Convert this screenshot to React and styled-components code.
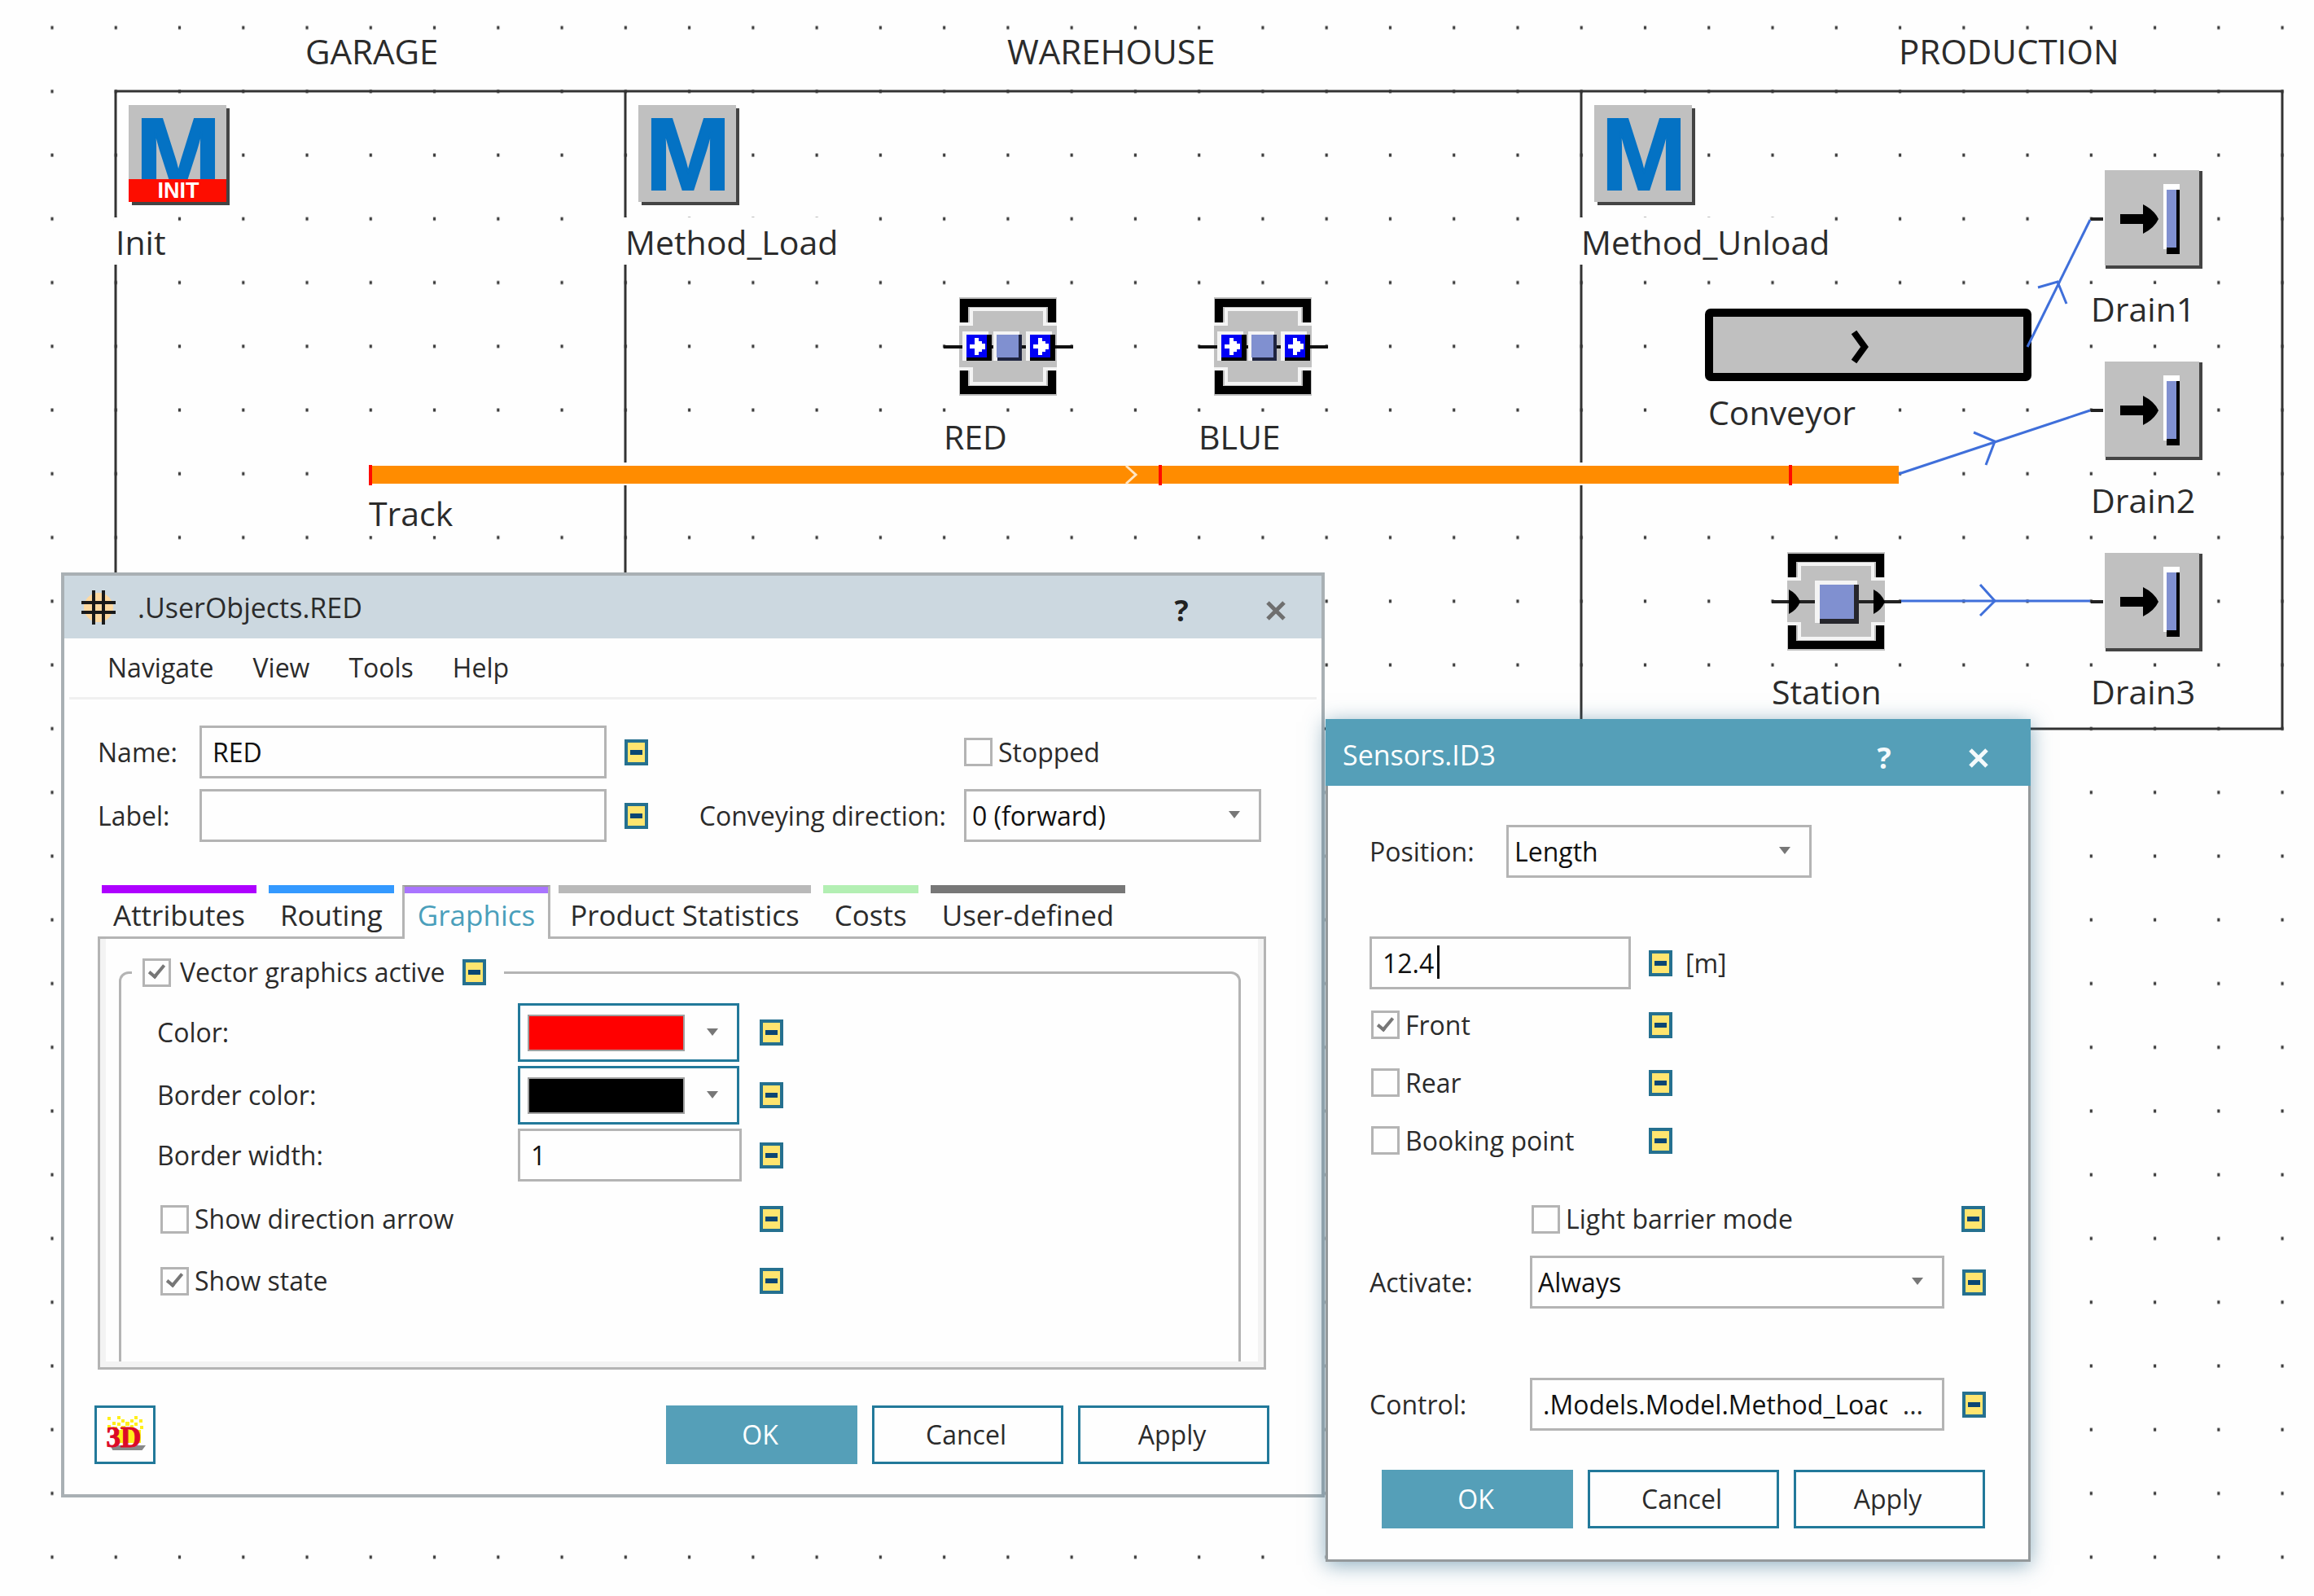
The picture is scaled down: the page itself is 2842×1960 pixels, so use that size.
import React from "react";
import styled, { createGlobalStyle, css } from "styled-components";

const PITCH = 78.26;
const ORIGIN_X = 64;
const ORIGIN_Y = 34;

const color = {
  page: "#fefefe",
  ink: "#2b2b2b",
  line: "#333333",
  field: "#b4b4b4",
  teal: "#559fb8",
  tealDark: "#22799a",
  silver: "#c0c0c0",
  lilac: "#8090d0",
};

const GlobalStyle = createGlobalStyle`
  *, *::before, *::after { box-sizing: border-box; }
  body {
    margin: 0;
    background: ${color.page};
    color: ${color.ink};
    font-family: "Open Sans", "Noto Sans", sans-serif;
    font-size: 32px;
    line-height: 44px;
  }
  button, input, select { font: inherit; color: inherit; margin: 0; }
`;

/* ---------- model canvas ---------- */

const Stage = styled.main`
  position: relative;
  min-height: 100vh;
  overflow: hidden;
`;

const Layer = styled.svg`
  position: absolute;
  inset: 0;
  width: 100%;
  height: 100%;
  pointer-events: none;
`;

const AreaTitle = styled.h2`
  position: absolute;
  left: ${(p) => p.$x}px;
  top: 34px;
  margin: 0;
  font-size: 42px;
  font-weight: 400;
  line-height: 57px;
`;

const NodeBox = styled.figure`
  position: absolute;
  left: ${(p) => p.$x}px;
  top: ${(p) => p.$y}px;
  margin: 0;
  display: flex;
  flex-direction: column;
  align-items: flex-start;
`;

const NodeArt = styled.svg`
  display: block;
  overflow: visible;
  flex: none;
`;

const NodeLabel = styled.figcaption`
  margin-left: -2px;
  padding: 2px 0 0 2px;
  background: ${color.page};
  font-size: 41px;
  line-height: 56px;
  white-space: nowrap;
`;

function Node({ x, y, width = 156, height = 159, label, children }) {
  return (
    <NodeBox $x={x} $y={y}>
      <NodeArt width={width} height={height} aria-hidden="true">
        {children}
      </NodeArt>
      <NodeLabel>{label}</NodeLabel>
    </NodeBox>
  );
}

function MethodArt({ init }) {
  return (
    <g>
      <rect x="20" y="21" width="120" height="119" fill="#444" />
      <rect x="16" y="17" width="120" height="119" fill={color.silver} />
      <text
        x="77"
        y="121"
        textAnchor="middle"
        fontFamily="Liberation Sans, Arial, sans-serif"
        fontWeight="700"
        fontSize="126"
        fill="#0472c4"
        stroke="#0472c4"
        strokeWidth="2"
      >
        M
      </text>
      {init && (
        <g>
          <rect x="16" y="108" width="120" height="28" fill="#fd0d00" />
          <text
            x="77"
            y="131"
            textAnchor="middle"
            fontFamily="Liberation Sans, Arial, sans-serif"
            fontWeight="700"
            fontSize="27"
            fill="#fff"
          >
            INIT
          </text>
        </g>
      )}
    </g>
  );
}

function Brackets() {
  return (
    <g>
      <rect x="19" y="18" width="120" height="121" fill={color.silver} />
      <path d="M19 51H34V33H124V51H139" fill="none" stroke="#f4f4f4" strokeWidth="4" />
      <path d="M19 106H34V124H124V106H139" fill="none" stroke="#f4f4f4" strokeWidth="4" />
      <path d="M25 49V25H133V49" fill="none" stroke="#000" strokeWidth="10" />
      <path d="M25 108V132H133V108" fill="none" stroke="#000" strokeWidth="10" />
    </g>
  );
}

function FlowBlock({ x }) {
  return (
    <g>
      <rect x={x - 5} y="60" width="32" height="36" fill="#f4f4f4" />
      <rect x={x} y="64" width="31" height="32" fill="#000" />
      <rect x={x} y="64" width="25" height="28" fill="#0000f5" />
      <path d={`M${x + 4} 76h6v-8h5v4h4v3h4v7h-4v3h-4v4h-5v-8h-6z`} fill="#fff" />
    </g>
  );
}

function ParallelStationArt() {
  return (
    <g>
      <Brackets />
      <path d="M0 79H159" stroke="#111" strokeWidth="4" />
      <FlowBlock x={28} />
      <rect x="61" y="60" width="32" height="36" fill="#f4f4f4" />
      <rect x="66" y="64" width="30" height="32" fill="#1f2440" />
      <rect x="65" y="64" width="27" height="28" fill={color.lilac} />
      <FlowBlock x={106} />
    </g>
  );
}

function StationArt() {
  return (
    <g>
      <Brackets />
      <path d="M0 79H159" stroke="#222" strokeWidth="4" />
      <path d="M21 64Q31 69 35 79Q31 89 21 94z" />
      <path d="M125 64Q135 69 139 79Q135 89 125 94z" />
      <rect x="53" y="53" width="52" height="52" fill="#f4f4f4" />
      <rect x="59" y="58" width="48" height="48" fill="#26262c" />
      <rect x="59" y="58" width="42" height="42" fill={color.lilac} />
    </g>
  );
}

function DrainArt() {
  return (
    <g>
      <path d="M0 79H15" stroke="#222" strokeWidth="4" />
      <rect x="18" y="20" width="119" height="120" fill="#444" />
      <rect x="17" y="19" width="116" height="117" fill={color.silver} />
      <path d="M36 73H64V61Q78 68 83 79Q78 90 64 97V85H36z" />
      <rect x="89" y="36" width="20" height="80" fill="#fff" />
      <rect x="93" y="43" width="16" height="79" fill="#000" />
      <rect x="93" y="43" width="12" height="71" fill={color.lilac} />
    </g>
  );
}

function ConveyorArt() {
  return (
    <g>
      <rect x="1" y="5" width="391" height="79" rx="2" fill={color.silver} stroke="#000" strokeWidth="10" />
      <path d="M179 29L192 47L179 65" fill="none" stroke="#000" strokeWidth="8" />
    </g>
  );
}

function TrackArt() {
  return (
    <g>
      <rect x="0" y="0" width="1878" height="28" fill="#fefefe" />
      <rect x="2" y="4" width="1877" height="22" fill="#ff8c00" />
      <path d="M930 4L942 15L930 26" fill="none" stroke="#ffe6c4" strokeWidth="3" />
      <path d="M2 3V28M972 3V28M1746 3V28" stroke="#ff0a00" strokeWidth="4" />
    </g>
  );
}

function Backdrop() {
  return (
    <Layer aria-hidden="true">
      <defs>
        <pattern
          id="grid-dots"
          x={ORIGIN_X - PITCH / 2}
          y={ORIGIN_Y - PITCH / 2}
          width={PITCH}
          height={PITCH}
          patternUnits="userSpaceOnUse"
        >
          <rect x={PITCH / 2 - 1.6} y={PITCH / 2 - 2} width="3.2" height="4" fill="#3c3c3c" />
        </pattern>
      </defs>
      <rect width="100%" height="100%" fill="url(#grid-dots)" />
      <rect x="142" y="112" width="2661" height="783" fill="none" stroke={color.line} strokeWidth="3" />
      <path d="M768 112V895M1942 112V895" stroke={color.line} strokeWidth="3" />
    </Layer>
  );
}

function Connectors() {
  return (
    <Layer aria-hidden="true">
      <g fill="none" stroke="#3f6fda" strokeWidth="3">
        <path d="M2490 426L2567 270" />
        <path d="M2503 353L2527 346L2538 373" />
        <path d="M2332 582L2567 504" />
        <path d="M2424 531L2450 542L2439 571" />
        <path d="M2335 738H2567" />
        <path d="M2432 718L2450 738L2432 756" />
      </g>
    </Layer>
  );
}

/* ---------- dialogs ---------- */

const Dialog = styled.section`
  position: absolute;
  left: ${(p) => p.$x}px;
  top: ${(p) => p.$y}px;
  width: ${(p) => p.$width}px;
  background: ${color.page};
  ${(p) =>
    p.$active
      ? css`
          box-shadow: 0 4px 24px rgba(50, 110, 140, 0.55);
        `
      : css`
          border: 4px solid #a9b0b4;
        `}
`;

const TitleBar = styled.header`
  display: flex;
  align-items: center;
  height: 77px;
  padding: 0 26px 0 21px;
  gap: 27px;
  background: #ccd8e0;
  ${(p) =>
    p.$active &&
    css`
      height: 82px;
      padding: 6px 34px 0 21px;
      background: ${color.teal};
      color: #fff;
    `}
`;

const Title = styled.h1`
  flex: 1;
  margin: 0;
  font-size: 34px;
  font-weight: 400;
  line-height: 46px;
`;

const TitleActions = styled.div`
  display: flex;
  gap: 56px;
  padding-top: 8px;
`;

const TitleButton = styled.button`
  display: grid;
  place-items: center;
  width: 60px;
  height: 44px;
  padding: 0;
  border: 0;
  background: none;
  font-size: 36px;
  font-weight: 700;
  color: ${(p) => p.$tone};
`;

const Menu = styled.nav`
  display: flex;
  align-items: center;
  gap: 48px;
  height: 75px;
  margin: 0 6px;
  padding: 0 47px;
  border-bottom: 3px solid #f0f0f0;
`;

const MenuItem = styled.button`
  padding: 0;
  border: 0;
  background: none;
`;

const ObjectBody = styled.div`
  padding: 32px 64px 37px 37px;
`;

const Inset = styled.div`
  padding: 0 4px;
`;

const HeadFields = styled.div`
  display: grid;
  row-gap: 13px;
  padding-right: 6px;
`;

const FieldRow = styled.div`
  display: flex;
  align-items: center;
  height: 65px;
  gap: 22px;
`;

const LabelledField = styled.div`
  display: grid;
  grid-template-columns: ${(p) => p.$label}px ${(p) => p.$field}px;
  align-items: center;
`;

const EndGroup = styled.div`
  display: flex;
  align-items: center;
  gap: 22px;
  margin-left: auto;
`;

const EndSlot = styled.div`
  display: flex;
  width: 365px;
`;

const TextInput = styled.input`
  display: block;
  width: 100%;
  height: 65px;
  padding: 0 13px;
  border: 3px solid ${color.field};
  border-radius: 0;
  background: ${color.page};
  color: #111;
  outline: none;
`;

const SelectWrap = styled.div`
  position: relative;
  width: 100%;
`;

const SelectBox = styled.select`
  appearance: none;
  display: block;
  width: 100%;
  height: 65px;
  padding: 0 48px 0 7px;
  border: 3px solid ${color.field};
  border-radius: 0;
  background: ${color.page};
  color: #111;
  outline: none;
`;

const SelectArrow = styled.svg`
  position: absolute;
  right: 25px;
  top: 27px;
  pointer-events: none;
`;

function Select({ id, value }) {
  return (
    <SelectWrap>
      <SelectBox id={id} defaultValue={value}>
        <option>{value}</option>
      </SelectBox>
      <SelectArrow width="16" height="10" aria-hidden="true">
        <path d="M1 0H15L8 9z" fill="#777" />
      </SelectArrow>
    </SelectWrap>
  );
}

const CheckLabel = styled.label`
  display: flex;
  align-items: center;
  gap: ${(p) => p.$gap || 7}px;
  white-space: nowrap;
`;

const CheckBox = styled.input`
  appearance: none;
  display: grid;
  place-items: center;
  flex: none;
  width: 35px;
  height: 35px;
  border: 3px solid ${color.field};
  background: ${color.page};
  &:checked::after {
    content: "";
    width: 11px;
    height: 20px;
    margin-bottom: 6px;
    border: solid #777;
    border-width: 0 4px 4px 0;
    transform: rotate(40deg);
  }
`;

function Check({ children, checked, gap }) {
  return (
    <CheckLabel $gap={gap}>
      <CheckBox type="checkbox" defaultChecked={checked} />
      {children}
    </CheckLabel>
  );
}

const ToggleButton = styled.button`
  display: grid;
  place-items: center;
  flex: none;
  width: 29px;
  height: 32px;
  padding: 0;
  border: 4px solid #25708f;
  background: #ffe56f;
  &::before {
    content: "";
    width: 15px;
    height: 6px;
    background: #0b4673;
  }
`;

const Inherit = () => <ToggleButton type="button" aria-label="Toggle inheritance" />;

const TabList = styled.div`
  display: flex;
  gap: 15px;
  margin-top: 53px;
  padding-left: 5px;
`;

const Tab = styled.button`
  height: 63px;
  padding: 0 14px;
  border: 0;
  border-top: 10px solid ${(p) => p.$tone};
  background: none;
  font-size: 35px;
  line-height: 48px;
  white-space: nowrap;
  ${(p) =>
    p.$selected &&
    css`
      height: 66px;
      margin: 0 -5px -3px;
      padding: 8px 16px 3px;
      border: 3px solid ${color.field};
      border-top: 2px solid #999;
      border-bottom: 0;
      background: ${color.page};
      box-shadow: inset 0 8px ${p.$tone};
      color: #4a9fbb;
    `}
`;

const TabPanel = styled.div`
  padding: 19px 28px 7px 23px;
  border: 3px solid ${color.field};
  box-shadow: inset 7px 0 #f3f3f3, inset -7px -7px #f3f3f3;
`;

const Group = styled.fieldset`
  min-width: 0;
  margin: 0;
  padding: 16px 0 69px 44px;
  border: 3px solid ${color.field};
  border-bottom: 0;
  border-radius: 12px 12px 0 0;
`;

const GroupLegend = styled.legend`
  display: flex;
  align-items: center;
  gap: 22px;
  margin-left: -31px;
  padding: 0 22px 0 13px;
`;

const Properties = styled.div`
  display: grid;
  grid-template-columns: 443px 275px 1fr;
  grid-template-rows: 72px 72px 65px 82px 60px;
  row-gap: 5px;
  align-items: center;
`;

const CheckCell = styled.div`
  display: flex;
  grid-column: span 2;
  padding-left: 4px;
`;

const ToggleCell = styled.div`
  padding-left: 22px;
`;

const ColorButton = styled.button`
  display: flex;
  align-items: center;
  gap: 26px;
  width: 272px;
  height: 72px;
  padding: 0 9px;
  border: 3px solid ${color.tealDark};
  background: ${color.page};
`;

const Swatch = styled.span`
  width: 193px;
  height: 45px;
  border: 2px solid #a0a0a0;
  background: ${(p) => p.$fill};
`;

function ColorPicker({ id, fill }) {
  return (
    <ColorButton type="button" id={id}>
      <Swatch $fill={fill} />
      <svg width="16" height="10" aria-hidden="true">
        <path d="M1 0H15L8 9z" fill="#777" />
      </svg>
    </ColorButton>
  );
}

const Footer = styled.footer`
  display: flex;
  justify-content: flex-end;
  gap: 18px;
  margin-top: ${(p) => p.$space}px;
`;

const PushButton = styled.button`
  width: 235px;
  height: 72px;
  padding: 0 4px 0 0;
  border: 3px solid ${color.tealDark};
  background: ${color.page};
  ${(p) =>
    p.$primary &&
    css`
      border-color: ${color.teal};
      background: ${color.teal};
      color: #fff;
    `}
`;

const ViewButton = styled.button`
  display: grid;
  place-items: center;
  width: 75px;
  height: 72px;
  margin-right: auto;
  padding: 0;
  border: 3px solid ${color.tealDark};
  background: ${color.page};
`;

function CloseMark({ tone }) {
  return (
    <svg width="24" height="24" aria-hidden="true">
      <path d="M2 2L22 22M22 2L2 22" stroke={tone} strokeWidth="5" />
    </svg>
  );
}

function FrameIcon() {
  return (
    <svg width="42" height="42" aria-hidden="true">
      <ellipse cx="21" cy="21" rx="18" ry="18" fill="#ffd9a0" />
      <path d="M15 0V42M27 0V42M0 15H42M0 27H42" stroke="#1a1a1a" strokeWidth="4" />
    </svg>
  );
}

function View3DIcon() {
  return (
    <svg width="60" height="60" viewBox="-5 -6 60 60" aria-hidden="true">
      <g fill="#ffef1a">
        <path d="M3 2h4v4h-4zM15 1h4v4h-4zM36 1h4v4h-4zM42 5h4v4h-4zM20 5h4v4h-4zM31 5h4v4h-4zM9 8h4v4h-4zM15 9h4v4h-4zM25 8h5v5h-5zM3 12h4v4h-4zM36 9h4v4h-4zM43 13h4v4h-4zM20 13h5v6h-5zM31 12h4v5h-4zM10 14h5v5h-5z" />
        <rect x="14" y="18" width="30" height="16" />
      </g>
      <path d="M8 38H48L45 42H10z" fill="#888" stroke="#888" strokeWidth="2" />
      <text
        x="23"
        y="39"
        textAnchor="middle"
        fontFamily="Liberation Serif, serif"
        fontWeight="700"
        fontSize="35"
        fill="#dc0a28"
        stroke="#dc0a28"
        strokeWidth="1"
      >
        3D
      </text>
    </svg>
  );
}

function DialogTitle({ children, icon, active }) {
  const tone = active ? "#f4fafc" : "#6f6f6f";
  return (
    <TitleBar $active={active}>
      {icon}
      <Title>{children}</Title>
      <TitleActions>
        <TitleButton type="button" $tone={active ? "#f4fafc" : "#222"}>
          ?
        </TitleButton>
        <TitleButton type="button" aria-label="Close">
          <CloseMark tone={tone} />
        </TitleButton>
      </TitleActions>
    </TitleBar>
  );
}

function DialogButtons({ space, children }) {
  return (
    <Footer $space={space}>
      {children}
      <PushButton type="button" $primary>OK</PushButton>
      <PushButton type="button">Cancel</PushButton>
      <PushButton type="button">Apply</PushButton>
    </Footer>
  );
}

const tabs = [
  ["Attributes", "#ae00ff"],
  ["Routing", "#3399ff"],
  ["Graphics", "#a974ff"],
  ["Product Statistics", "#b9b9b9"],
  ["Costs", "#b3efb3"],
  ["User-defined", "#777777"],
];

function ObjectDialog() {
  return (
    <Dialog $x={75} $y={703} $width={1552}>
      <DialogTitle icon={<FrameIcon />}>.UserObjects.RED</DialogTitle>
      <Menu>
        {["Navigate", "View", "Tools", "Help"].map((item) => (
          <MenuItem type="button" key={item}>{item}</MenuItem>
        ))}
      </Menu>
      <ObjectBody>
        <Inset>
          <HeadFields>
            <FieldRow>
              <LabelledField $label={125} $field={500}>
                <label htmlFor="name">Name:</label>
                <TextInput id="name" defaultValue="RED" />
              </LabelledField>
              <Inherit />
              <EndGroup>
                <EndSlot>
                  <Check>Stopped</Check>
                </EndSlot>
              </EndGroup>
            </FieldRow>
            <FieldRow>
              <LabelledField $label={125} $field={500}>
                <label htmlFor="label">Label:</label>
                <TextInput id="label" />
              </LabelledField>
              <Inherit />
              <EndGroup>
                <label htmlFor="direction">Conveying direction:</label>
                <EndSlot>
                  <Select id="direction" value="0 (forward)" />
                </EndSlot>
              </EndGroup>
            </FieldRow>
          </HeadFields>
          <TabList role="tablist">
            {tabs.map(([name, tone]) => (
              <Tab
                key={name}
                type="button"
                role="tab"
                aria-selected={name === "Graphics"}
                $tone={tone}
                $selected={name === "Graphics"}
              >
                {name}
              </Tab>
            ))}
          </TabList>
          <TabPanel role="tabpanel">
            <Group>
              <GroupLegend>
                <Check checked gap={11}>Vector graphics active</Check>
                <Inherit />
              </GroupLegend>
              <Properties>
                <label htmlFor="fill-color">Color:</label>
                <ColorPicker id="fill-color" fill="#ff0000" />
                <ToggleCell><Inherit /></ToggleCell>

                <label htmlFor="border-color">Border color:</label>
                <ColorPicker id="border-color" fill="#000000" />
                <ToggleCell><Inherit /></ToggleCell>

                <label htmlFor="border-width">Border width:</label>
                <TextInput id="border-width" defaultValue="1" />
                <ToggleCell><Inherit /></ToggleCell>

                <CheckCell><Check>Show direction arrow</Check></CheckCell>
                <ToggleCell><Inherit /></ToggleCell>

                <CheckCell><Check checked>Show state</Check></CheckCell>
                <ToggleCell><Inherit /></ToggleCell>
              </Properties>
            </Group>
          </TabPanel>
        </Inset>
        <DialogButtons space={44}>
          <ViewButton type="button" aria-label="Open in 3D">
            <View3DIcon />
          </ViewButton>
        </DialogButtons>
      </ObjectBody>
    </Dialog>
  );
}

const SensorBody = styled.div`
  padding: 48px 53px 38px 51px;
  border: 3px solid #94999b;
  border-top: 0;
`;

const LengthRow = styled(FieldRow)`
  margin-top: 72px;
`;

const LengthField = styled.div`
  position: relative;
  width: 321px;
`;

const Caret = styled.span`
  position: absolute;
  left: 83px;
  top: 11px;
  width: 3px;
  height: 41px;
  background: #111;
`;

const UnitGroup = styled.div`
  display: flex;
  align-items: center;
  gap: 16px;
`;

const SensorChecks = styled.div`
  display: grid;
  grid-template-columns: 341px 29px;
  grid-auto-rows: 71px;
  align-items: center;
  margin-top: 8px;
  padding-left: 2px;
`;

const LightRow = styled.div`
  display: flex;
  align-items: center;
  justify-content: space-between;
  height: 62px;
  margin-top: 30px;
  padding-left: 199px;
`;

const WideRow = styled(FieldRow)`
  margin-top: ${(p) => p.$space}px;
`;

const PathField = styled.div`
  display: flex;
  align-items: center;
  height: 65px;
  padding: 0 23px 0 13px;
  border: 3px solid ${color.field};
`;

const PathInput = styled.input`
  flex: 1;
  min-width: 0;
  padding: 0;
  border: 0;
  background: none;
  color: #111;
  outline: none;
`;

const BrowseButton = styled.button`
  flex: none;
  width: 44px;
  padding: 0;
  border: 0;
  background: none;
  text-align: right;
`;

function SensorDialog() {
  return (
    <Dialog $x={1628} $y={883} $width={866} $active>
      <DialogTitle active>Sensors.ID3</DialogTitle>
      <SensorBody>
        <FieldRow>
          <LabelledField $label={168} $field={375}>
            <label htmlFor="position">Position:</label>
            <Select id="position" value="Length" />
          </LabelledField>
        </FieldRow>
        <LengthRow>
          <LengthField>
            <TextInput defaultValue="12.4" aria-label="Length in metres" />
            <Caret />
          </LengthField>
          <UnitGroup>
            <Inherit />
            <span>[m]</span>
          </UnitGroup>
        </LengthRow>
        <SensorChecks>
          <Check checked>Front</Check>
          <Inherit />
          <Check>Rear</Check>
          <Inherit />
          <Check>Booking point</Check>
          <Inherit />
        </SensorChecks>
        <LightRow>
          <Check>Light barrier mode</Check>
          <Inherit />
        </LightRow>
        <WideRow $space={14}>
          <LabelledField $label={197} $field={509}>
            <label htmlFor="activate">Activate:</label>
            <Select id="activate" value="Always" />
          </LabelledField>
          <Inherit />
        </WideRow>
        <WideRow $space={85}>
          <LabelledField $label={197} $field={509}>
            <label htmlFor="control">Control:</label>
            <PathField>
              <PathInput id="control" defaultValue=".Models.Model.Method_Load" />
              <BrowseButton type="button">...</BrowseButton>
            </PathField>
          </LabelledField>
          <Inherit />
        </WideRow>
        <DialogButtons space={48} />
      </SensorBody>
    </Dialog>
  );
}

export default function App() {
  return (
    <>
      <GlobalStyle />
      <Stage>
        <Backdrop />
        <AreaTitle $x={375}>GARAGE</AreaTitle>
        <AreaTitle $x={1237}>WAREHOUSE</AreaTitle>
        <AreaTitle $x={2332}>PRODUCTION</AreaTitle>

        <Node x={142} y={112} height={155} label="Init"><MethodArt init /></Node>
        <Node x={768} y={112} height={155} label="Method_Load"><MethodArt /></Node>
        <Node x={1942} y={112} height={155} label="Method_Unload"><MethodArt /></Node>
        <Node x={1159} y={347} label="RED"><ParallelStationArt /></Node>
        <Node x={1472} y={347} label="BLUE"><ParallelStationArt /></Node>
        <Node x={2098} y={379} width={400} height={97} label="Conveyor"><ConveyorArt /></Node>
        <Node x={453} y={568} width={1880} height={32} label="Track"><TrackArt /></Node>
        <Node x={2176} y={660} label="Station"><StationArt /></Node>
        <Node x={2568} y={190} label="Drain1"><DrainArt /></Node>
        <Node x={2568} y={425} label="Drain2"><DrainArt /></Node>
        <Node x={2568} y={660} label="Drain3"><DrainArt /></Node>
        <Connectors />

        <ObjectDialog />
        <SensorDialog />
      </Stage>
    </>
  );
}
